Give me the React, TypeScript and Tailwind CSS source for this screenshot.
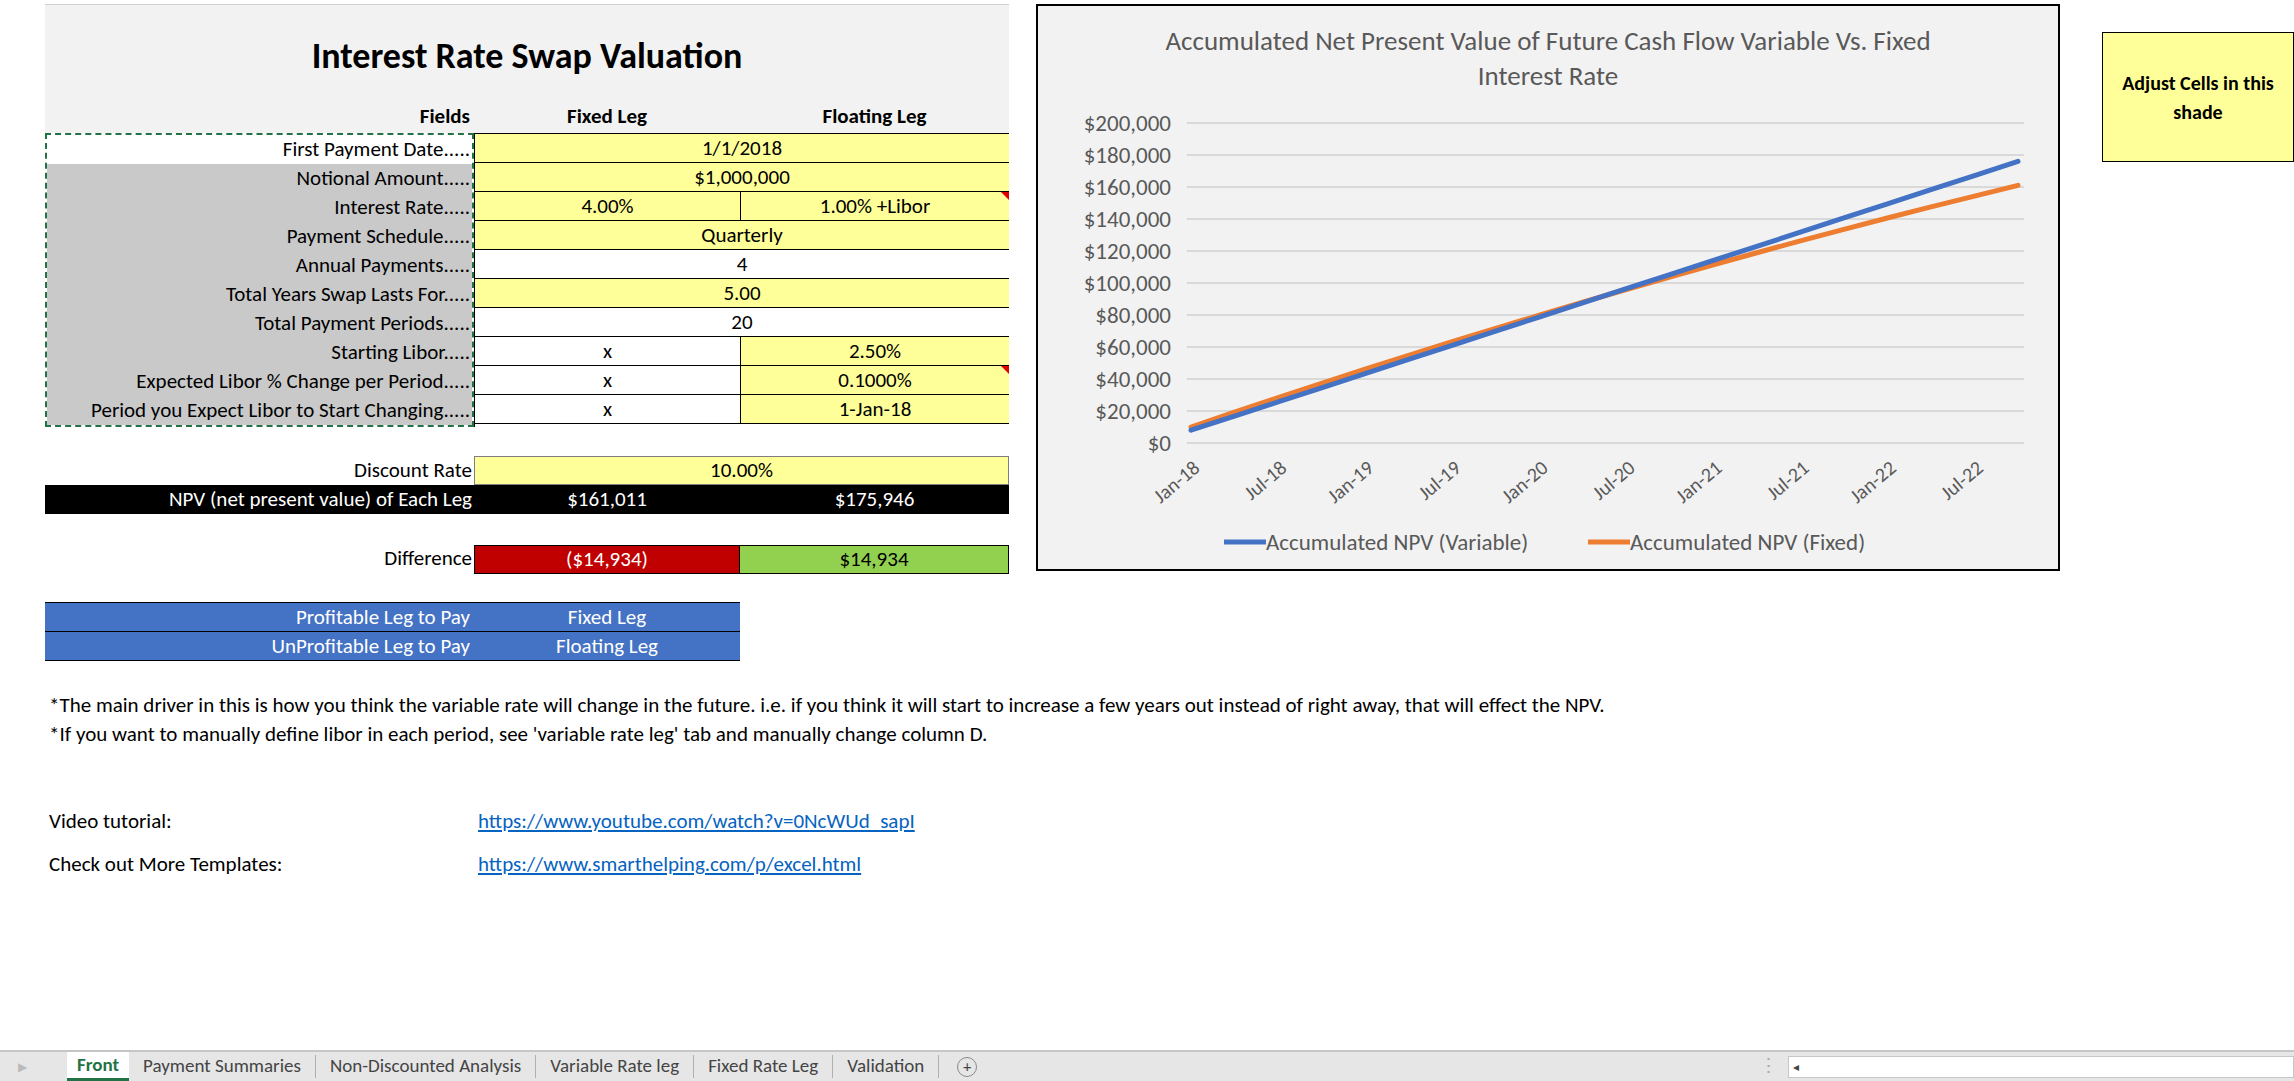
import React from "react";

const font = { fontFamily: "Carlito, Calibri, 'Open Sans', 'Liberation Sans', sans-serif" };

const rows: { label: string; white?: boolean; cells: [string, string, string][] }[] = [
  { label: "First Payment Date.....", white: true, cells: [["1/1/2018", "y", "full"]] },
  { label: "Notional Amount.....", cells: [["$1,000,000", "y", "full"]] },
  { label: "Interest Rate.....", cells: [["4.00%", "y", "half"], ["1.00% +Libor", "y", "half"]] },
  { label: "Payment Schedule.....", cells: [["Quarterly", "y", "full"]] },
  { label: "Annual Payments.....", cells: [["4", "w", "full"]] },
  { label: "Total Years Swap Lasts For.....", cells: [["5.00", "y", "full"]] },
  { label: "Total Payment Periods.....", cells: [["20", "w", "full"]] },
  { label: "Starting Libor.....", cells: [["x", "w", "half"], ["2.50%", "y", "half"]] },
  { label: "Expected Libor % Change per Period.....", cells: [["x", "w", "half"], ["0.1000%", "y", "half"]] },
  { label: "Period you Expect Libor to Start Changing.....", cells: [["x", "w", "half"], ["1-Jan-18", "y", "half"]] },
];

function Chart() {
  const x0 = 153, x1 = 980, yTop = 117, yBot = 437;
  const y = (v: number) => yBot - (v / 200000) * (yBot - yTop);
  const x = (i: number) => x0 + (i * (x1 - x0)) / 19;
  const blue = Array.from({ length: 20 }, (_, i) => 8000 + i * 8842);
  const orange = Array.from({ length: 20 }, (_, i) => 10000 + 9315 * i - 72 * i * i);
  const pts = (d: number[]) => d.map((v, i) => `${x(i)},${y(v)}`).join(" ");
  const labels = ["Jan-18", "Jul-18", "Jan-19", "Jul-19", "Jan-20", "Jul-20", "Jan-21", "Jul-21", "Jan-22", "Jul-22"];
  return (
    <svg width="1020" height="563" className="block" style={font}>
      <text x="510" y="44" textAnchor="middle" fontSize="27" fill="#595959">Accumulated Net Present Value of Future Cash Flow Variable Vs. Fixed</text>
      <text x="510" y="79" textAnchor="middle" fontSize="27" fill="#595959">Interest Rate</text>
      {Array.from({ length: 11 }, (_, k) => {
        const v = k * 20000;
        return (
          <g key={k}>
            <line x1="149" x2="986" y1={y(v)} y2={y(v)} stroke="#d9d9d9" strokeWidth="2" />
            <text x="133" y={y(v) + 8} textAnchor="end" fontSize="23" fill="#595959">
              {"$" + v.toLocaleString("en-US")}
            </text>
          </g>
        );
      })}
      {labels.map((l, k) => (
        <text key={l} x={x(k * 2) + 10} y="464" textAnchor="end" fontSize="20" fill="#595959" transform={`rotate(-40 ${x(k * 2) + 10} 464)`}>
          {l}
        </text>
      ))}
      <polyline points={pts(orange)} fill="none" stroke="#ed7d31" strokeWidth="5" strokeLinejoin="round" strokeLinecap="round" />
      <polyline points={pts(blue)} fill="none" stroke="#4472c4" strokeWidth="5" strokeLinejoin="round" strokeLinecap="round" />
      <line x1="186" x2="228" y1="536" y2="536" stroke="#4472c4" strokeWidth="5" />
      <text x="228" y="544" fontSize="23" fill="#595959">Accumulated NPV (Variable)</text>
      <line x1="550" x2="592" y1="536" y2="536" stroke="#ed7d31" strokeWidth="5" />
      <text x="592" y="544" fontSize="23" fill="#595959">Accumulated NPV (Fixed)</text>
    </svg>
  );
}

export default function App() {
  return (
    <div className="w-[2294px] h-[1081px] bg-white flex flex-col overflow-hidden text-[21px] text-black" style={font}>
      <div className="flex-1 flex pl-[45px] pt-[4px] relative">
        {/* left sheet block */}
        <div className="w-[964px] flex flex-col">
          <div className="bg-[#f2f2f2] border-t border-[#d0d0d0]">
            <div className="h-[96px] flex items-center justify-center text-[36px] font-bold pt-[6px]">Interest Rate Swap Valuation</div>
            <div className="h-[32px] flex font-bold items-end pb-[1px]">
              <div className="w-[429px] text-right pr-[4px]">Fields</div>
              <div className="w-[266px] text-center">Fixed Leg</div>
              <div className="w-[269px] text-center">Floating Leg</div>
            </div>
          </div>
          <div className="flex">
            <div className="w-[429px] border-2 border-dashed border-[#217346]">
              {rows.map((r) => (
                <div key={r.label} className={`h-[29px] leading-[29px] text-right pr-[2px] whitespace-nowrap ${r.white ? "bg-white" : "bg-[#c9c9c9]"}`}>{r.label}</div>
              ))}
            </div>
            <div className="w-[535px] border-l border-t border-black">
              {rows.map((r) => (
                <div key={r.label} className="h-[29px] flex border-b border-black">
                  {r.cells.map(([t, c, w], i) => (
                    <div key={i} className={`relative h-full leading-[28px] text-center ${w === "full" ? "w-full" : i === 0 ? "w-[266px] border-r border-black" : "flex-1"} ${c === "y" ? "bg-[#ffff99]" : "bg-white"}`}>
                      {t}
                      {(t === "1.00% +Libor" || t === "0.1000%") && (
                        <span className="absolute right-0 top-0 w-0 h-0 border-l-[8px] border-l-transparent border-t-[8px] border-t-[#e00000]" />
                      )}
                    </div>
                  ))}
                </div>
              ))}
            </div>
          </div>
          <div className="h-[29px]" />
          <div className="flex h-[29px] leading-[29px]">
            <div className="w-[429px] text-right pr-[2px]">Discount Rate</div>
            <div className="flex-1 bg-[#ffff99] border border-[#7f7f7f] text-center leading-[27px]">10.00%</div>
          </div>
          <div className="flex h-[29px] leading-[29px] bg-black text-white">
            <div className="w-[429px] text-right pr-[2px]">NPV (net present value) of Each Leg</div>
            <div className="w-[266px] text-center">$161,011</div>
            <div className="flex-1 text-center">$175,946</div>
          </div>
          <div className="h-[31px]" />
          <div className="flex h-[29px] leading-[27px]">
            <div className="w-[429px] text-right pr-[2px]">Difference</div>
            <div className="w-[266px] text-center bg-[#c00000] text-white border border-black">($14,934)</div>
            <div className="flex-1 text-center bg-[#92d050] border border-black border-l-0">$14,934</div>
          </div>
          <div className="h-[28px]" />
          <div className="w-[695px] bg-[#4472c4] text-white border-t border-black">
            <div className="flex h-[29px] leading-[29px] border-b border-black">
              <div className="w-[429px] text-right pr-[4px]">Profitable Leg to Pay</div>
              <div className="flex-1 text-center">Fixed Leg</div>
            </div>
            <div className="flex h-[29px] leading-[29px] border-b border-black">
              <div className="w-[429px] text-right pr-[4px]">UnProfitable Leg to Pay</div>
              <div className="flex-1 text-center">Floating Leg</div>
            </div>
          </div>
          <div className="mt-[30px] w-[1900px] leading-[29px] pl-[4px]">
            <div>*The main driver in this is how you think the variable rate will change in the future. i.e. if you think it will start to increase a few years out instead of right away, that will effect the NPV.</div>
            <div>*If you want to manually define libor in each period, see 'variable rate leg' tab and manually change column D.</div>
          </div>
          <div className="mt-[58px] pl-[4px] flex flex-col gap-[14px] leading-[29px]">
            <div className="flex"><span className="w-[429px]">Video tutorial:</span><span className="text-[#0563c1] underline">https://www.youtube.com/watch?v=0NcWUd_sapI</span></div>
            <div className="flex"><span className="w-[429px]">Check out More Templates:</span><span className="text-[#0563c1] underline">https://www.smarthelping.com/p/excel.html</span></div>
          </div>
        </div>
        {/* chart */}
        <div className="ml-[27px] w-[1024px] h-[567px] border-2 border-black bg-[#f2f2f2]">
          <Chart />
        </div>
        {/* legend box */}
        <div className="ml-[42px] mt-[28px] w-[200px] h-[130px] border border-black bg-[#ffff99] font-bold text-[20px] leading-[29px] text-center pt-[36px]">
          Adjust Cells in this<br />shade
        </div>
      </div>
      {/* tab bar */}
      <div className="h-[31px] bg-[#e6e6e6] border-t-2 border-[#c6c6c6] flex items-stretch text-[19px] text-[#444]">
        <div className="w-[67px] flex items-center pl-[18px] text-[#bbb] text-[12px]">▶</div>
        <div className="px-[10px] bg-white text-[#217346] font-bold border-b-[3px] border-[#217346] flex items-center">Front</div>
        {["Payment Summaries", "Non-Discounted Analysis", "Variable Rate leg", "Fixed Rate Leg", "Validation"].map((t) => (
          <div key={t} className="px-[14px] flex items-center border-r border-[#b0b0b0] my-[3px]">{t}</div>
        ))}
        <div className="ml-[18px] flex items-center">
          <span className="w-[20px] h-[20px] rounded-full border border-[#888] flex items-center justify-center text-[16px] leading-none">+</span>
        </div>
        <div className="ml-auto flex items-center gap-[10px]">
          <span className="text-[#aaa]">⋮</span>
          <div className="w-[506px] h-[22px] bg-white border border-[#c6c6c6] flex items-center text-[12px] pl-[4px]">◂</div>
        </div>
      </div>
    </div>
  );
}
